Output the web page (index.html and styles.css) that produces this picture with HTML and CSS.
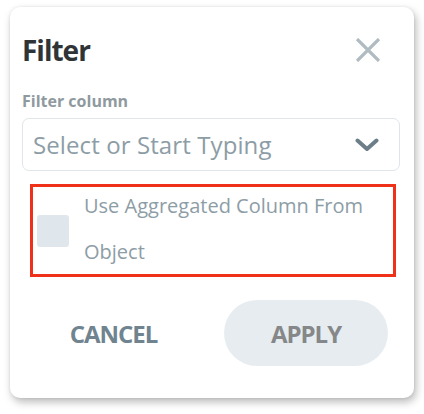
FILE: index.html
```html
<!DOCTYPE html>
<html>
<head>
<meta charset="utf-8">
<link rel="stylesheet" href="styles.css">
</head>
<body>
<div class="card">
  <div class="header">
    <h1 class="title">Filter</h1>
    <button class="close" aria-label="Close">
      <svg width="26" height="24" viewBox="0 0 26 24"><path d="M2 1 L24 23 M24 1 L2 23" stroke="#b0bcc2" stroke-width="3.2" fill="none"/></svg>
    </button>
  </div>
  <div class="label">Filter column</div>
  <div class="select">
    <span class="placeholder">Select or Start Typing</span>
    <svg class="chevron" width="24" height="14" viewBox="0 0 24 14"><path d="M2.5 2.5 L12 11 L21.5 2.5" stroke="#6c7f89" stroke-width="4" fill="none" stroke-linecap="round" stroke-linejoin="round"/></svg>
  </div>
  <div class="agg">
    <span class="checkbox"></span>
    <span class="agg-text">Use Aggregated Column From Object</span>
  </div>
  <div class="actions">
    <button class="cancel">CANCEL</button>
    <button class="apply">APPLY</button>
  </div>
</div>
</body>
</html>
```
FILE: styles.css
```css
html, body {
  margin: 0;
  background: #ffffff;
}
body {
  font-family: "Open Sans", "Noto Sans", sans-serif;
  width: 424px;
  height: 414px;
  overflow: hidden;
}
.card {
  box-sizing: border-box;
  margin: 7px 0 0 10px;
  width: 404px;
  height: 391px;
  background: #fff;
  border-radius: 10px;
  box-shadow: 2px 4px 8px rgba(0,0,0,0.28), 0 0 3px rgba(0,0,0,0.08);
  padding: 23px 14px 0 12px;
}
.header {
  display: flex;
  justify-content: space-between;
  align-items: center;
  height: 40px;
}
.title {
  margin: 0;
  font-size: 28px;
  font-weight: 700;
  color: #2f3437;
  letter-spacing: -1px;
}
.close {
  border: 0;
  background: none;
  padding: 0;
  margin-right: 19px;
  display: flex;
}
.label {
  margin-top: 20px;
  font-size: 16px;
  font-weight: 700;
  color: #8f9aa0;
  height: 22px;
  line-height: 22px;
}
.select {
  margin-top: 6px;
  height: 53px;
  box-sizing: border-box;
  border: 1px solid #dfe5e8;
  border-radius: 7px;
  display: flex;
  align-items: center;
  justify-content: space-between;
  padding: 0 20px 0 10px;
}
.placeholder {
  font-size: 24px;
  color: #8d9da6;
  letter-spacing: 0.1px;
}
.agg {
  margin: 13px 4px 0 8px;
  height: 93px;
  box-sizing: border-box;
  border: 3px solid #f0311a;
  display: flex;
  align-items: center;
  padding: 0 10px 0 4px;
  gap: 15px;
}
.checkbox {
  flex: none;
  width: 32px;
  height: 32px;
  border-radius: 3px;
  background: #dfe7ec;
}
.agg-text {
  font-size: 20px;
  line-height: 46px;
  color: #8d9da6;
  margin-top: -3px;
}
.actions {
  margin-top: 23px;
  display: flex;
  align-items: center;
  justify-content: space-between;
}
.cancel {
  border: 0;
  background: none;
  font-family: inherit;
  font-size: 24px;
  font-weight: 700;
  letter-spacing: -1px;
  color: #6f848f;
  width: 163px;
  height: 66px;
  margin-left: 10px;
  padding: 0;
}
.apply {
  border: 0;
  font-family: inherit;
  font-size: 24px;
  font-weight: 700;
  letter-spacing: -1px;
  color: #858788;
  background: #e6ecf0;
  width: 164px;
  height: 66px;
  border-radius: 33px;
  padding: 0;
  margin-right: 12px;
}
```
